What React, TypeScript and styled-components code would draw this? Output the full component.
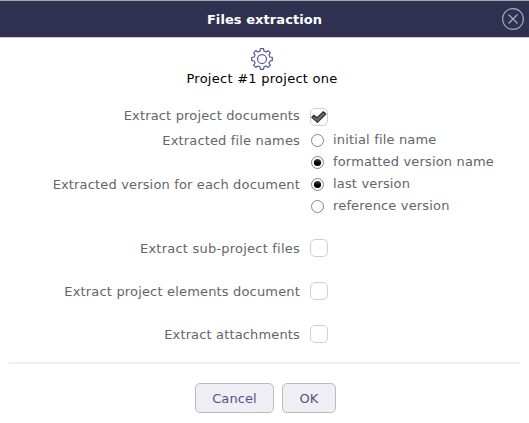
import React from "react";
import styled, { createGlobalStyle } from "styled-components";

const GlobalStyle = createGlobalStyle`
  *, *::before, *::after { box-sizing: border-box; }
  body {
    margin: 0;
    background: #fff;
    font-family: Verdana, "DejaVu Sans", sans-serif;
    font-size: 13px;
    letter-spacing: 0.16px;
    color: #656565;
  }
`;

const Dialog = styled.section`
  width: 529px;
  height: 423px;
  overflow: hidden;
  background: #fff;
`;

const TitleBar = styled.header`
  display: grid;
  grid-template-columns: 1fr auto 1fr;
  align-items: center;
  height: 38px;
  padding: 0 5px;
  background: #303150;
  border-top: 1px solid #a5a9a8;
  border-bottom: 1px solid #c9c9d3;
`;

const Title = styled.h1`
  grid-column: 2;
  margin: 0;
  padding-top: 1px;
  font-size: 13px;
  line-height: 16px;
  font-weight: bold;
  letter-spacing: 0.07px;
  color: #fff;
  white-space: nowrap;
`;

const CloseButton = styled.button`
  justify-self: end;
  display: flex;
  padding: 0;
  border: 0;
  background: none;
`;

const Heading = styled.div`
  display: flex;
  flex-direction: column;
  align-items: center;
  height: 67px;
  padding: 10px 5px 0 0;
`;

const ProjectName = styled.p`
  margin: 1px 0 0;
  line-height: 16px;
  letter-spacing: 0.26px;
  color: #000;
`;

const Row = styled.div<{ $height: number }>`
  display: grid;
  grid-template-columns: 300px 1fr;
  column-gap: 10px;
  align-items: center;
  height: ${(p) => p.$height}px;
`;

const ToggleRows = styled.div`
  display: flex;
  flex-direction: column;
  gap: 25px;
  padding-top: 22px;
`;

const Label = styled.label<{ $raised?: boolean; $spacing?: number }>`
  justify-self: end;
  padding: ${(p) => (p.$raised ? "0 0 2px" : "2px 0 0")};
  line-height: 16px;
  letter-spacing: ${(p) => p.$spacing ?? 0.16}px;
  white-space: nowrap;
`;

const CheckBox = styled.span`
  display: block;
  width: 18px;
  height: 18px;
  border: 1px solid #d0d0d0;
  border-radius: 5px;
  background: #fff;
  svg { display: block; margin: -1px; }
`;

const Option = styled.label`
  display: flex;
  align-items: center;
  gap: 8px;
  padding-left: 1px;
  line-height: 16px;
  white-space: nowrap;
`;

const Separator = styled.hr`
  height: 2px;
  margin: 19px 9px 19px;
  border: 0;
  background: #eeeeee;
`;

const Actions = styled.footer`
  display: flex;
  justify-content: center;
  gap: 8px;
  padding-left: 2px;
`;

const Button = styled.button<{ $width: number }>`
  width: ${(p) => p.$width}px;
  height: 30px;
  padding: 0;
  border: 1px solid #bcbcbc;
  border-radius: 5px;
  background: #efeef5;
  font: inherit;
  letter-spacing: 0.1px;
  color: #545287;
`;

const CloseIcon = () => (
  <svg width="22" height="22" viewBox="0 0 22 22" fill="none" stroke="#a9abb0">
    <circle cx="11" cy="11" r="10.4" strokeWidth="1.1" />
    <path d="M6.5 6.5l9 9M15.5 6.5l-9 9" strokeWidth="1.3" />
  </svg>
);

const gearPath = (() => {
  const points: string[] = [];
  for (let i = 0; i < 8; i++) {
    const a = (i * Math.PI) / 4 - Math.PI / 2;
    [[-0.25, 8.1], [-0.15, 10.4], [0.15, 10.4], [0.25, 8.1]].forEach(([d, r]) => {
      points.push(`${(11 + r * Math.cos(a + d)).toFixed(2)} ${(11 + r * Math.sin(a + d)).toFixed(2)}`);
    });
  }
  return `M${points.join("L")}Z`;
})();

const GearIcon = () => (
  <svg width="22" height="22" viewBox="0 0 22 22" fill="none" stroke="#5c5a9c" strokeWidth="1.25" strokeLinejoin="round">
    <path d={gearPath} />
    <circle cx="11" cy="11" r="4.5" />
  </svg>
);

const CheckIcon = () => (
  <svg width="18" height="18" viewBox="0 0 18 18">
    <path d="M1.8 9.4L4 7.2l3 2.6L13.4 3.8l2.4 2.2L7.4 14.4Z" fill="#6c6c6c" stroke="#333" strokeWidth="1.2" strokeLinejoin="round" />
  </svg>
);

const Radio = ({ checked }: { checked?: boolean }) => (
  <svg width="14" height="14" viewBox="0 0 14 14">
    <defs>
      <linearGradient id="dot" x1="0" y1="0" x2="0" y2="1">
        <stop offset="0" stopColor="#444" />
        <stop offset="0.6" stopColor="#000" />
      </linearGradient>
    </defs>
    <circle cx="6.5" cy="7.5" r="6" fill="#fff" stroke="#858585" />
    {checked && <circle cx="6.5" cy="7.5" r="3.6" fill="url(#dot)" />}
  </svg>
);

const options = [
  { label: "Extracted file names", text: "initial file name", checked: false },
  { label: "", text: "formatted version name", checked: true },
  { label: "Extracted version for each document", text: "last version", checked: true },
  { label: "", text: "reference version", checked: false },
];

const toggles = [
  { label: "Extract sub-project files", spacing: 0.22 },
  { label: "Extract project elements document", spacing: 0.17 },
  { label: "Extract attachments", spacing: 0.15 },
];

export default function App() {
  return (
    <>
      <GlobalStyle />
      <Dialog>
        <TitleBar>
          <Title>Files extraction</Title>
          <CloseButton aria-label="Close"><CloseIcon /></CloseButton>
        </TitleBar>
        <Heading>
          <GearIcon />
          <ProjectName>Project #1 project one</ProjectName>
        </Heading>
        <Row $height={24}>
          <Label $raised>Extract project documents</Label>
          <CheckBox><CheckIcon /></CheckBox>
        </Row>
        {options.map((o) => (
          <Row key={o.text} $height={22}>
            <Label>{o.label}</Label>
            <Option>
              <Radio checked={o.checked} />
              {o.text}
            </Option>
          </Row>
        ))}
        <ToggleRows>
          {toggles.map((t) => (
            <Row key={t.label} $height={18}>
              <Label $spacing={t.spacing}>{t.label}</Label>
              <CheckBox />
            </Row>
          ))}
        </ToggleRows>
        <Separator />
        <Actions>
          <Button $width={79}>Cancel</Button>
          <Button $width={54}>OK</Button>
        </Actions>
      </Dialog>
    </>
  );
}
